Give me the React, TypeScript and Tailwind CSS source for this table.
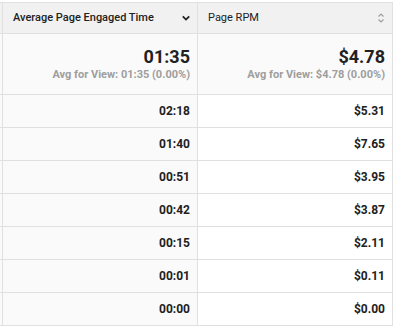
import React from 'react';

const rows = [
  { time: '02:18', rpm: '$5.31' },
  { time: '01:40', rpm: '$7.65' },
  { time: '00:51', rpm: '$3.95' },
  { time: '00:42', rpm: '$3.87' },
  { time: '00:15', rpm: '$2.11' },
  { time: '00:01', rpm: '$0.11' },
  { time: '00:00', rpm: '$0.00' },
];

function ChevronDown() {
  return (
    <svg width="10" height="10" viewBox="0 0 10 10" className="text-[#212121]">
      <path d="M1.8 3.4 L5 6.6 L8.2 3.4" fill="none" stroke="currentColor" strokeWidth="1.8" />
    </svg>
  );
}

function SortIcon() {
  return (
    <svg width="10" height="12" viewBox="0 0 10 12" className="text-[#9e9e9e]">
      <path d="M2.5 4.5 L5 2 L7.5 4.5" fill="none" stroke="currentColor" strokeWidth="1.2" />
      <path d="M2.5 7.5 L5 10 L7.5 7.5" fill="none" stroke="currentColor" strokeWidth="1.2" />
    </svg>
  );
}

export default function App() {
  return (
    <div className="w-[393px] h-[334px] bg-white pt-[2px] text-[#212121] font-['Roboto','Liberation_Sans',sans-serif]">
      <div className="grid grid-cols-[3px_195px_195px] w-[393px]">
        {/* header */}
        <div className="h-[32px] bg-[#f1f1f1] border-y border-r border-[#e0e0e0]" />
        <div className="h-[32px] bg-[#f1f1f1] border-y border-r border-[#e0e0e0] flex items-center justify-between pl-[10px] pr-[6px]">
          <span className="text-[11px] font-medium">Average Page Engaged Time</span>
          <ChevronDown />
        </div>
        <div className="h-[32px] bg-[#f1f1f1] border-y border-r border-[#e0e0e0] flex items-center justify-between pl-[10px] pr-[6px]">
          <span className="text-[11px] font-normal">Page RPM</span>
          <SortIcon />
        </div>

        {/* summary */}
        <div className="h-[61px] bg-[#fafafa] border-b border-r border-[#e0e0e0]" />
        <div className="h-[61px] bg-[#fafafa] border-b border-r border-[#e0e0e0] flex flex-col items-end justify-center pr-[7px]">
          <span className="text-[18px] leading-[22px] font-bold">01:35</span>
          <span className="text-[11px] leading-[14px] font-bold text-[#9e9e9e]">Avg for View: 01:35 (0.00%)</span>
        </div>
        <div className="h-[61px] bg-[#fafafa] border-b border-r border-[#e0e0e0] flex flex-col items-end justify-center pr-[7px]">
          <span className="text-[18px] leading-[22px] font-bold">$4.78</span>
          <span className="text-[11px] leading-[14px] font-bold text-[#9e9e9e]">Avg for View: $4.78 (0.00%)</span>
        </div>

        {rows.map((r) => (
          <React.Fragment key={r.time + r.rpm}>
            <div className="h-[33px] bg-[#fafafa] border-b border-r border-[#e0e0e0]" />
            <div className="h-[33px] bg-[#fafafa] border-b border-r border-[#e0e0e0] flex items-center justify-end pr-[7px] text-[12px] font-bold">
              {r.time}
            </div>
            <div className="h-[33px] bg-white border-b border-r border-[#e0e0e0] flex items-center justify-end pr-[7px] text-[12px] font-bold">
              {r.rpm}
            </div>
          </React.Fragment>
        ))}
      </div>
    </div>
  );
}
